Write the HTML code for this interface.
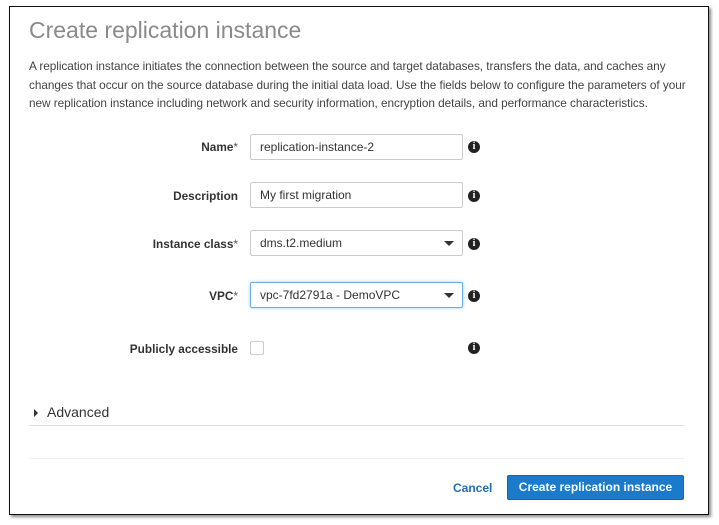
<!DOCTYPE html>
<html><head><style>
body{margin:0;width:719px;height:525px;background:#fff;font-family:"Liberation Sans",Arial,sans-serif;position:relative;overflow:hidden}
.frame{position:absolute;left:9px;top:6px;width:698px;height:507px;border:1.5px solid #111;box-shadow:2px 2px 3px #888;background:#fff}
.a{position:absolute}
h1{position:absolute;left:29px;top:17px;margin:0;font-weight:normal;font-size:23px;color:#8a8a8a}
p{position:absolute;left:29px;top:57px;width:680px;margin:0;font-size:11.8px;line-height:18.5px;color:#444;letter-spacing:-0.05px}
.lbl{position:absolute;right:481px;font-size:11.8px;font-weight:bold;color:#333}
.lbl span{font-weight:normal;color:#555}
.inp{position:absolute;left:250px;width:202px;height:24px;border:1px solid #ccc;border-radius:2px;padding-left:9px;font-size:12px;line-height:24px;color:#333}
.tri{position:absolute;right:8px;top:10px;width:0;height:0;border-left:5px solid transparent;border-right:5px solid transparent;border-top:5px solid #333}
.info{position:absolute;left:468px;width:12px;height:12px;border-radius:50%;background:#222;color:#fff;font:bold 10px/12px "Liberation Serif",serif;text-align:center}
</style></head><body>
<div class="frame"></div>
<h1>Create replication instance</h1>
<p>A replication instance initiates the connection between the source and target databases, transfers the data, and caches any changes that occur on the source database during the initial data load. Use the fields below to configure the parameters of your new replication instance including network and security information, encryption details, and performance characteristics.</p>

<div class="lbl" style="top:140px">Name<span>*</span></div>
<div class="inp" style="top:134px">replication-instance-2</div>
<div class="info" style="top:141px">i</div>

<div class="lbl" style="top:189px">Description</div>
<div class="inp" style="top:182px">My first migration</div>
<div class="info" style="top:190px">i</div>

<div class="lbl" style="top:237px">Instance class<span>*</span></div>
<div class="inp" style="top:230px">dms.t2.medium<div class="tri"></div></div>
<div class="info" style="top:238px">i</div>

<div class="lbl" style="top:289px">VPC<span>*</span></div>
<div class="inp" style="top:282px;border-color:#66afe9;box-shadow:0 0 3px #9cc9ef">vpc-7fd2791a - DemoVPC<div class="tri"></div></div>
<div class="info" style="top:290px">i</div>

<div class="lbl" style="top:342px">Publicly accessible</div>
<div class="a" style="left:250px;top:341px;width:12px;height:12px;border:1px solid #ccc;border-radius:2px"></div>
<div class="info" style="top:342px">i</div>

<div class="a" style="left:34px;top:409px;width:0;height:0;border-top:4px solid transparent;border-bottom:4px solid transparent;border-left:4px solid #333"></div>
<div class="a" style="left:47px;top:404px;font-size:14px;color:#333">Advanced</div>
<div class="a" style="left:29px;top:425px;width:655px;height:1px;background:#ddd"></div>
<div class="a" style="left:29px;top:458px;width:655px;height:1px;background:#eee"></div>

<div class="a" style="left:453px;top:481px;font-size:12px;font-weight:bold;color:#1f6fb5">Cancel</div>
<div class="a" style="left:507px;top:475px;width:177px;height:25px;background:#1a7acc;border:1px solid #1565b0;border-radius:2px;box-sizing:border-box;color:#fff;font-size:12px;font-weight:bold;text-align:center;line-height:23px">Create replication instance</div>
</body></html>
